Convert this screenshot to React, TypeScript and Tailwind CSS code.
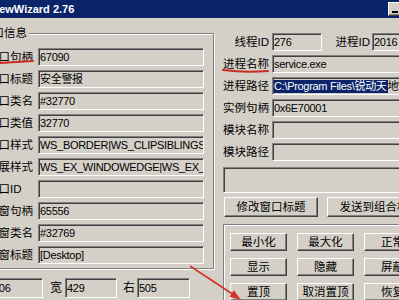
import type { ReactNode } from "react";

const sunken =
  "border border-t-[#808080] border-l-[#808080] border-b-white border-r-white shadow-[inset_1px_1px_0_#404040] bg-[#d4d0c8]";
const raised =
  "border border-t-white border-l-white border-b-[#404040] border-r-[#404040] shadow-[inset_-1px_-1px_0_#808080] bg-[#d4d0c8]";

function Edit({ className, children }: { className: string; children?: ReactNode }) {
  return (
    <div
      className={`${sunken} ${className} flex shrink-0 items-center overflow-hidden whitespace-nowrap pl-[1px] text-[11px] leading-[13px] tracking-[-0.3px] text-black`}
    >
      {children}
    </div>
  );
}

function Btn({ className, children }: { className: string; children: ReactNode }) {
  return (
    <div
      className={`${raised} ${className} flex shrink-0 items-center justify-center overflow-hidden whitespace-nowrap text-[11.5px] leading-[13px] text-black`}
    >
      {children}
    </div>
  );
}

const leftRows: [string, string][] = [
  ["窗口句柄", "67090"],
  ["窗口标题", "安全警报"],
  ["窗口类名", "#32770"],
  ["窗口类值", "32770"],
  ["窗口样式", "WS_BORDER|WS_CLIPSIBLINGS|WS_CAPTION"],
  ["扩展样式", "WS_EX_WINDOWEDGE|WS_EX_DLGMODALFRAME"],
  ["窗口ID", ""],
  ["父窗句柄", "65556"],
  ["父窗类名", "#32769"],
  ["父窗标题", "[Desktop]"],
];

const rightRows: [string, ReactNode][] = [
  ["进程名称", "service.exe"],
  [
    "进程路径",
    <>
      <span className="bg-[#0a246a] pr-[1px] text-white">{"C:\\Program Files\\锐动天"}</span>
      <span>地\service.exe</span>
    </>,
  ],
  ["实例句柄", "0x6E70001"],
  ["模块名称", ""],
  ["模块路径", ""],
];

const actions = ["最小化", "最大化", "正常", "显示", "隐藏", "屏蔽", "置顶", "取消置顶", "恢复"];

export default function App() {
  return (
    <div className="relative h-[300px] w-[399px] overflow-hidden bg-[#d4d0c8] font-['Liberation_Sans','Noto_Sans_CJK_SC',sans-serif] text-black">
      {/* caption */}
      <div className="flex h-[18px] items-center justify-between bg-[#0a246a]">
        <span className="ml-[-11px] whitespace-nowrap text-[11px] font-bold leading-[13px] text-white">
          ViewWizard 2.76
        </span>
        <div className={`${raised} mr-[-5px] flex h-[14px] w-[16px] shrink-0 items-end pb-[2px] pl-[3px]`}>
          <div className="h-[2px] w-[6px] bg-black" />
        </div>
      </div>

      <div className="flex items-start">
        {/* left column */}
        <div className="ml-[-28px] flex w-[242px] shrink-0 flex-col pt-[15px]">
          <div className="flex h-[236px] flex-col border border-[#808080] shadow-[inset_1px_1px_0_#fff,1px_1px_0_#fff]">
            <span className="ml-[6px] mt-[-9px] self-start bg-[#d4d0c8] px-[2px] text-[11.5px] leading-[16px]">
              窗口信息
            </span>
            <div className="mt-[7px] flex flex-col gap-[4px] pl-[14px]">
              {leftRows.map(([label, value]) => (
                <div key={label} className="flex h-[18px] items-center">
                  <span className="w-[51px] shrink-0 whitespace-nowrap text-[11.5px] leading-[14px]">{label}</span>
                  <Edit className="h-[18px] w-[166px]">{value}</Edit>
                </div>
              ))}
            </div>
          </div>

          <div className="mt-[9px] flex items-center pl-[19px]">
            <Edit className="h-[20px] w-[52px]">306</Edit>
            <span className="ml-[7px] w-[12px] shrink-0 text-[12px] leading-[14px]">宽</span>
            <Edit className="ml-[3px] h-[20px] w-[52px]">429</Edit>
            <span className="ml-[6px] w-[12px] shrink-0 text-[12px] leading-[14px]">右</span>
            <Edit className="ml-[2px] h-[20px] w-[53px]">505</Edit>
          </div>
        </div>

        {/* right column */}
        <div className="flex shrink-0 flex-col pl-[9px] pt-[15px]">
          <div className="flex flex-col gap-[4px]">
            <div className="flex h-[18px] items-center">
              <span className="w-[46px] shrink-0 whitespace-nowrap text-right text-[11.5px] leading-[14px]">线程ID</span>
              <Edit className="ml-[3px] h-[18px] w-[50px]">276</Edit>
              <span className="ml-[12px] w-[36px] shrink-0 whitespace-nowrap text-right text-[11.5px] leading-[14px]">
                进程ID
              </span>
              <Edit className="ml-[2px] h-[18px] w-[60px]">2016</Edit>
            </div>
            {rightRows.map(([label, value]) => (
              <div key={label} className="flex h-[18px] items-center">
                <span className="w-[46px] shrink-0 whitespace-nowrap text-right text-[11.5px] leading-[14px]">{label}</span>
                <Edit className="ml-[3px] h-[18px] w-[140px]">{value}</Edit>
              </div>
            ))}
          </div>

          <Edit className="mt-[6px] h-[26px] w-[190px]" />

          <div className="mt-[4px] flex gap-[9px] pl-[1px]">
            <Btn className="h-[20px] w-[94px]">修改窗口标题</Btn>
            <Btn className="h-[20px] w-[94px]">发送到组合框</Btn>
          </div>

          <div className="mt-[7px] h-[100px] w-[200px] border border-[#808080] pl-[6px] pt-[8px] shadow-[inset_1px_1px_0_#fff]">
            <div className="grid grid-cols-[57px_57px_57px] gap-x-[10px] gap-y-[7px]">
              {actions.map((a) => (
                <Btn key={a} className="h-[18px] w-[57px]">
                  {a}
                </Btn>
              ))}
            </div>
          </div>
        </div>
      </div>

      {/* red annotations drawn over the screenshot */}
      <svg className="pointer-events-none absolute left-0 top-0" width="399" height="300" viewBox="0 0 399 300">
        <path d="M0 63 Q16 62 33 61" stroke="#cc2b22" strokeWidth="2" fill="none" strokeLinecap="round" />
        <path d="M223 70 Q245 73 268 71" stroke="#cc2b22" strokeWidth="2" fill="none" strokeLinecap="round" />
        <path d="M190 266 L234 295" stroke="#d2342a" strokeWidth="1.6" fill="none" />
        <polygon points="241,300 229.4,296.8 233.9,290.2" fill="#d2342a" />
      </svg>
    </div>
  );
}
